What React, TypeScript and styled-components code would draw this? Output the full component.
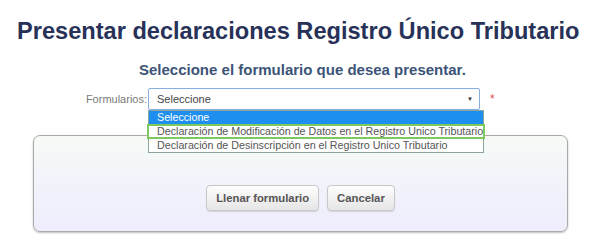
import styled, { createGlobalStyle } from "styled-components";

const GlobalStyle = createGlobalStyle`
    body{
        margin: 0;
        background: #ffffff;
        font-family: "Liberation Sans", Arial, sans-serif;
    }
`;

const options = [
    "Seleccione",
    "Declaración de Modificación de Datos en el Registro Unico Tributario",
    "Declaración de Desinscripción en el Registro Unico Tributario",
];

const App = () => {
    return (
        <>
            <GlobalStyle />
            <Page>
                <Title>Presentar declaraciones Registro Único Tributario</Title>
                <Subtitle>Seleccione el formulario que desea presentar.</Subtitle>
                <FormRow>
                    <Label htmlFor="formularios">Formularios:</Label>
                    <SelectWrapper>
                        <SelectBox id="formularios">
                            <span>Seleccione</span>
                            <Arrow>▼</Arrow>
                        </SelectBox>
                        <ListBox>
                            {options.map((option, index) => (
                                <Option key={option} isActive={index === 0} isOutlined={index === 1}>
                                    {option}
                                </Option>
                            ))}
                        </ListBox>
                    </SelectWrapper>
                    <Required>*</Required>
                </FormRow>
                <Panel>
                    <Button>Llenar formulario</Button>
                    <Button>Cancelar</Button>
                </Panel>
            </Page>
        </>
    );
};

const Page = styled.div`
    width: 610px;
    height: 250px;
    overflow: hidden;
    padding-top: 17px;
    box-sizing: border-box;
`;

const Title = styled.h1`
    margin: 0 0 0 17px;
    font-size: 23.6px;
    font-weight: bold;
    color: #283259;
    line-height: 29px;
    white-space: nowrap;
`;

const Subtitle = styled.h2`
    margin: 15px 0 0 0;
    padding-left: 139px;
    font-size: 15px;
    font-weight: bold;
    color: #3b5478;
    line-height: 18px;
`;

const FormRow = styled.div`
    display: flex;
    align-items: center;
    margin-top: 9px;
    padding-left: 60px;
`;

const Label = styled.label`
    width: 87px;
    text-align: right;
    font-size: 11px;
    color: #7a7a7a;
    padding-right: 1px;
`;

const SelectWrapper = styled.div`
    position: relative;
    width: 332px;
`;

const SelectBox = styled.div`
    display: flex;
    align-items: center;
    justify-content: space-between;
    height: 22px;
    box-sizing: border-box;
    padding: 0 6px 0 8px;
    border: 1px solid #86aee0;
    border-radius: 2px;
    background: #ffffff;
    font-size: 11px;
    color: #444;
`;

const Arrow = styled.span`
    font-size: 6px;
    color: #333;
`;

const ListBox = styled.div`
    position: absolute;
    top: 22px;
    left: 0;
    width: 336px;
    box-sizing: border-box;
    border: 1px solid #8aa59a;
    background: #ffffff;
    z-index: 2;
`;

const Option = styled.div<{ isActive: boolean; isOutlined: boolean }>`
    height: ${({ isOutlined }) => (isOutlined ? "15px" : "13px")};
    line-height: ${({ isOutlined }) => (isOutlined ? "11px" : "13px")};
    box-sizing: border-box;
    padding-left: 8px;
    font-size: 10.7px;
    white-space: nowrap;
    overflow: hidden;
    color: ${({ isActive }) => (isActive ? "#ffffff" : "#555555")};
    background: ${({ isActive }) => (isActive ? "#1e8ff0" : "#ffffff")};
    border: ${({ isOutlined }) => (isOutlined ? "2px solid #7dc95e" : "none")};
    margin: ${({ isOutlined }) => (isOutlined ? "0 -2px" : "0")};
`;

const Required = styled.span`
    margin-left: 10px;
    color: #e0514f;
    font-size: 12px;
`;

const Panel = styled.div`
    display: flex;
    justify-content: center;
    gap: 8px;
    margin: 25px 0 0 33px;
    width: 535px;
    height: 97px;
    box-sizing: border-box;
    padding-top: 49px;
    border: 1px solid #a9a9a9;
    border-radius: 7px;
    background: linear-gradient(to bottom, #f6fbf6 0%, #f1f4fa 45%, #efedfd 100%);
    box-shadow: 0 1px 2px rgba(0, 0, 0, 0.25);
`;

const Button = styled.button`
    height: 26px;
    padding: 0 9px;
    border: 1px solid #c8c8c8;
    border-radius: 4px;
    background: linear-gradient(to bottom, #fdfdfd, #e6e6e6);
    font-family: "Liberation Sans", Arial, sans-serif;
    font-size: 11.3px;
    font-weight: bold;
    color: #555555;
    box-shadow: 0 1px 1px rgba(0, 0, 0, 0.12);
`;

export default App;
